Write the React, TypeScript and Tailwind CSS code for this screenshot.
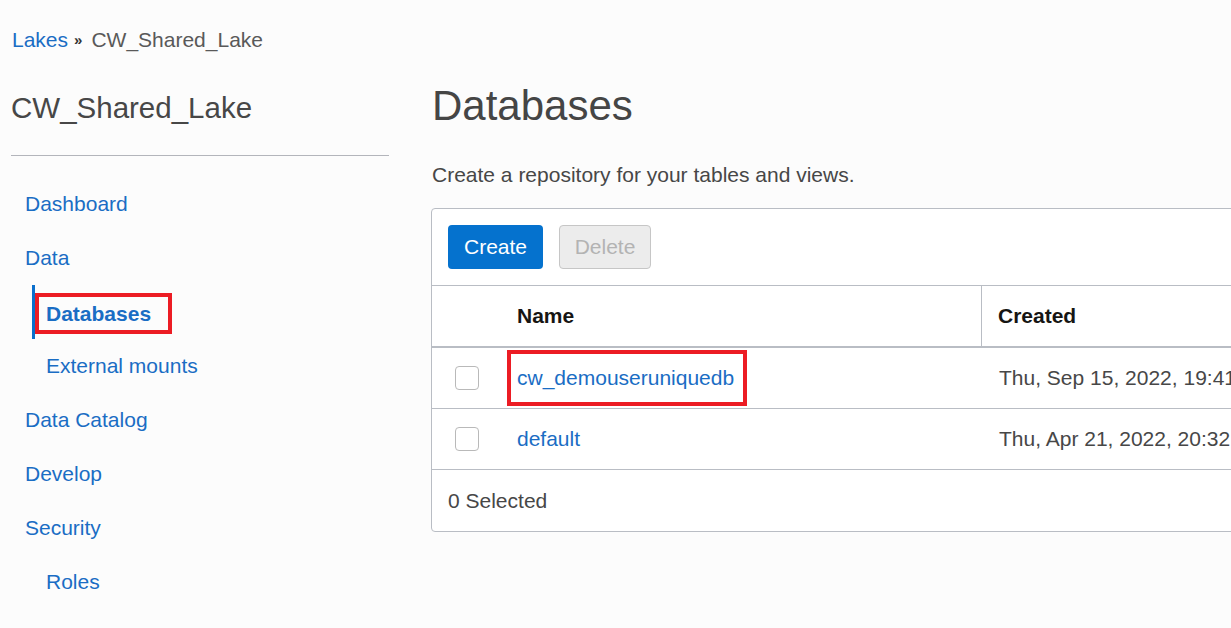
import React from "react";

const font = { fontFamily: '"Liberation Sans", Arial, sans-serif' };

function NavItem({ label, level = 1, active = false, boxed = false }: { label: string; level?: number; active?: boolean; boxed?: boolean }) {
    if (level === 1) {
        return (
            <div className="h-[54px] flex items-center pl-[14px] text-[21px] text-[#1a6dc4]">{label}</div>
        );
    }
    return (
        <div className={`h-[54px] ml-[21px] flex items-center border-l-[3px] ${active ? "border-[#0b6fcc]" : "border-transparent"}`}>
            {boxed ? (
                <div className="h-[41px] w-[137px] mt-[3px] border-4 border-[#ec1c24] flex items-center pl-[7px] text-[21px] font-bold text-[#1a6dc4]">
                    {label}
                </div>
            ) : (
                <span className="pl-[11px] text-[21px] text-[#1a6dc4]">{label}</span>
            )}
        </div>
    );
}

function Checkbox() {
    return <div className="w-[24px] h-[24px] rounded-[4px] border border-[#b9b9b9] bg-white" />;
}

export default function App() {
    return (
        <div className="w-[1231px] h-[628px] bg-[#fcfcfc] overflow-hidden" style={font}>
            <div className="pt-[28px] pl-[12px] h-[52px] flex items-center gap-[6px] text-[21px] leading-[24px]">
                <span className="text-[#1a6dc4]">Lakes</span>
                <span className="text-[15px] font-bold text-[#333]">»</span>
                <span className="text-[#595959] ml-[3px]">CW_Shared_Lake</span>
            </div>

            <div className="flex">
                <aside className="w-[378px] ml-[11px] shrink-0">
                    <h2 className="mt-[38px] h-[35px] leading-[35px] text-[29.5px] text-[#474747]">CW_Shared_Lake</h2>
                    <div className="mt-[30px] h-px bg-[#b3b5bb]" />
                    <nav className="mt-[21px]">
                        <NavItem label="Dashboard" />
                        <NavItem label="Data" />
                        <NavItem label="Databases" level={2} active boxed />
                        <NavItem label="External mounts" level={2} />
                        <NavItem label="Data Catalog" />
                        <NavItem label="Develop" />
                        <NavItem label="Security" />
                        <NavItem label="Roles" level={2} />
                    </nav>
                </aside>

                <main className="ml-[42px] shrink-0">
                    <h1 className="mt-[29px] h-[50px] leading-[50px] text-[42px] text-[#454545] pl-[1px]">Databases</h1>
                    <p className="mt-[32px] h-[24px] leading-[24px] text-[21px] text-[#474747] pl-[1px]">Create a repository for your tables and views.</p>

                    <div className="mt-[21px] w-[900px] border border-[#b9bdc4] rounded-[4px] bg-white">
                        <div className="flex gap-[16px] px-[16px] pt-[16px] pb-[16px] border-b border-[#b9bdc4]">
                            <button className="w-[95px] h-[44px] rounded-[4px] bg-[#0572ce] text-white text-[21px]">Create</button>
                            <button className="w-[92px] h-[44px] rounded-[4px] bg-[#ececec] border border-[#c6c6c6] text-[#b3b3b3] text-[21px]">Delete</button>
                        </div>

                        <div className="flex h-[62px] border-b-2 border-[#b9bdc4] text-[21px] font-bold text-[#161513]">
                            <div className="w-[69px]" />
                            <div className="w-[481px] flex items-center pl-[16px] border-r border-[#b9bdc4]">Name</div>
                            <div className="flex-1 flex items-center pl-[16px]">Created</div>
                        </div>

                        <div className="flex h-[61px] border-b border-[#b9bdc4] text-[21px]">
                            <div className="w-[69px] flex items-center justify-center"><Checkbox /></div>
                            <div className="w-[482px] flex items-center pl-[6px]">
                                <div className="h-[56px] w-[240px] border-4 border-[#ec1c24] flex items-center pl-[6px] text-[#1a6dc4]">cw_demouseruniquedb</div>
                            </div>
                            <div className="flex-1 flex items-center pl-[16px] text-[#474747] whitespace-nowrap">Thu, Sep 15, 2022, 19:41:07</div>
                        </div>

                        <div className="flex h-[61px] border-b border-[#b9bdc4] text-[21px]">
                            <div className="w-[69px] flex items-center justify-center"><Checkbox /></div>
                            <div className="w-[482px] flex items-center pl-[16px] text-[#1a6dc4]">default</div>
                            <div className="flex-1 flex items-center pl-[16px] text-[#474747] whitespace-nowrap">Thu, Apr 21, 2022, 20:32:15</div>
                        </div>

                        <div className="h-[61px] flex items-center pl-[16px] text-[21px] text-[#474747]">0 Selected</div>
                    </div>
                </main>
            </div>
        </div>
    );
}
